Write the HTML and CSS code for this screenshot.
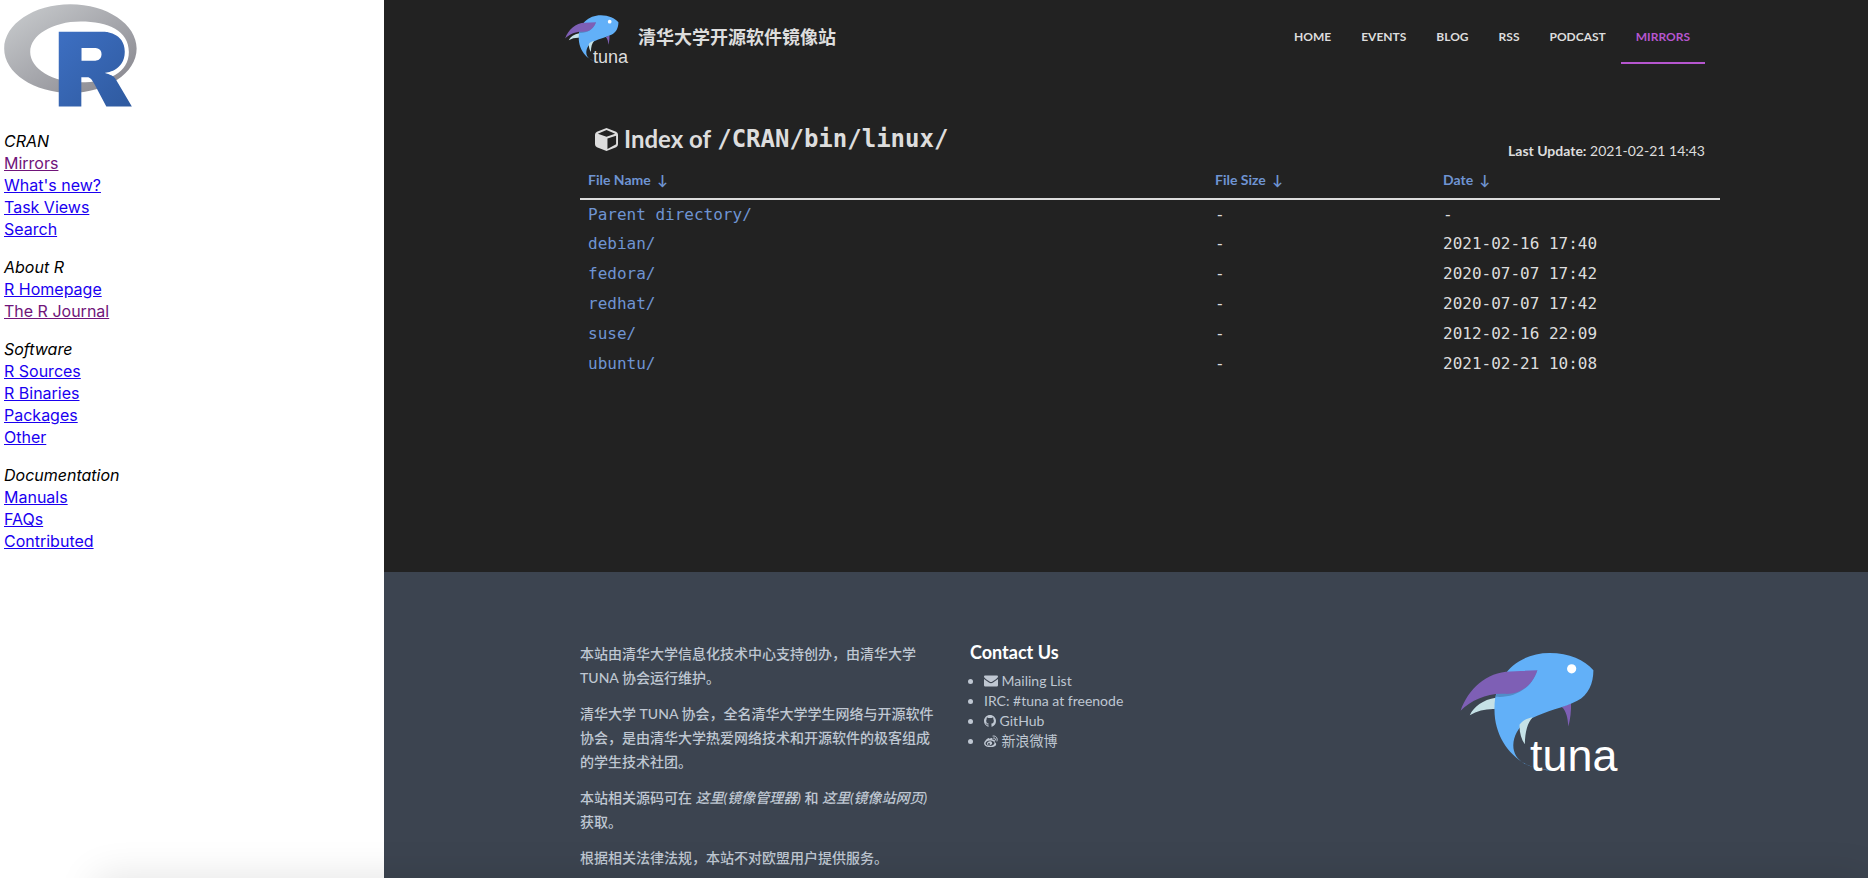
FILE: index.html
```html
<!DOCTYPE html>
<html lang="zh-CN">
<head>
    <meta charset="UTF-8">
    <title>The Comprehensive R Archive Network</title>
    <link rel="stylesheet" href="styles.css">
</head>
<body>
<!-- shared symbols -->
<svg class="symbols" aria-hidden="true">
    <symbol id="tuna" viewBox="60 66 484 364">
        <path fill="#c5e1e6" d="M89 258 C101 232 129 211 168 205 L165 239 C138 238 112 244 89 258 Z"/>
        <path fill="#7e5fb5" d="M368 233 L396 221 C397 246 394 270 388 292 C386 266 382 245 368 233 Z"/>
        <path fill="#62b0f8" d="M334 425 C240 424 161 341 164 235 C165 135 236 69 331 69 C391 69 437 91 464 121 C464 161 449 196 415 214 C374 235 320 245 277 267 C243 284 222 314 221 349 C221 390 254 418 334 425 Z"/>
        <path fill="#508dc8" d="M168 202 C216 206 272 185 294 122 L225 160 L170 191 Z"/>
        <path fill="#7e5fb5" d="M61 244 C84 179 139 126 212 125 L294 121 C278 169 242 194 198 193 C145 189 96 210 61 244 Z"/>
        <path fill="#c5e1e6" d="M280 264 C264 281 257 306 256 346 C245 330 239 309 240 286 C250 274 264 266 280 264 Z"/>
        <circle cx="398" cy="117" r="14" fill="#fff"/>
    </symbol>
</svg>

<div class="frames">
    <nav class="sidebar">
        <svg class="r-logo" viewBox="0 2 724 560" role="img" aria-label="R">
            <defs>
                <linearGradient id="ring" x1="0" y1="0" x2="1" y2="1">
                    <stop offset="0" stop-color="#cbced0"/>
                    <stop offset="1" stop-color="#84838b"/>
                </linearGradient>
                <linearGradient id="letter" x1="0" y1="0" x2="1" y2="1">
                    <stop offset="0" stop-color="#3d6fc2"/>
                    <stop offset="1" stop-color="#2f5a9f"/>
                </linearGradient>
            </defs>
            <path fill="url(#ring)" fill-rule="evenodd" d="M361.453,485.937C162.329,485.937 0.906,377.828 0.906,244.469C0.906,111.109 162.329,3 361.453,3C560.578,3 722,111.109 722,244.469C722,377.828 560.578,485.937 361.453,485.937ZM416.641,97.406C265.289,97.406 142.594,171.314 142.594,262.484C142.594,353.654 265.289,427.562 416.641,427.562C567.992,427.562 679.687,377.033 679.687,262.484C679.687,147.971 567.992,97.406 416.641,97.406Z"/>
            <path fill="url(#letter)" fill-rule="evenodd" d="M550,377C550,377 571.822,383.585 584.5,390C588.899,392.226 596.51,396.668 602,402.5C607.378,408.212 610,414 610,414L696,559L557,559.062L492,437C492,437 478.69,414.131 470.5,407.5C463.668,401.969 460.755,400 454,400L420.974,400L421,558.974L298,559.026L298,152.938L545,152.938C545,152.938 657.5,154.967 657.5,262C657.5,369.033 550,377 550,377ZM496.5,241.024L422.037,240.976L422,310.026L496.5,310.002C496.5,310.002 531,309.895 531,274.877C531,239.155 496.5,241.024 496.5,241.024Z"/>
        </svg>
        <p>
            <em>CRAN</em><br>
            <a class="visited" href="#">Mirrors</a><br>
            <a href="#">What's new?</a><br>
            <a href="#">Task Views</a><br>
            <a href="#">Search</a>
        </p>
        <p>
            <em>About R</em><br>
            <a href="#">R Homepage</a><br>
            <a class="visited" href="#">The R Journal</a>
        </p>
        <p>
            <em>Software</em><br>
            <a href="#">R Sources</a><br>
            <a href="#">R Binaries</a><br>
            <a href="#">Packages</a><br>
            <a href="#">Other</a>
        </p>
        <p>
            <em>Documentation</em><br>
            <a href="#">Manuals</a><br>
            <a href="#">FAQs</a><br>
            <a href="#">Contributed</a>
        </p>
    </nav>

    <div class="mirror">
        <header class="container navbar">
            <a class="brand" href="#">
                <svg class="brand-logo" viewBox="60 66 484 364" aria-hidden="true">
                    <use href="#tuna" x="60" y="66" width="484" height="364"/>
                    <text class="wordmark" x="272" y="427">tuna</text>
                </svg>
                <span>清华大学开源软件镜像站</span>
            </a>
            <nav class="menu">
                <a href="#">HOME</a>
                <a href="#">EVENTS</a>
                <a href="#">BLOG</a>
                <a href="#">RSS</a>
                <a href="#">PODCAST</a>
                <a class="active" href="#">MIRRORS</a>
            </nav>
        </header>

        <main class="container">
            <div class="heading">
                <h1>
                    <svg class="cube" viewBox="0 0 24 24" aria-hidden="true">
                        <path fill="currentColor" fill-rule="evenodd" d="M12 0 L22 4 Q24 5 24 7 V17 Q24 19 22 20 L12 24 L2 20 Q0 19 0 17 V7 Q0 5 2 4 Z M12 2 L3 6 L12 9 L21 6 Z M13 11 V22 L22 17 V8 Z"/>
                    </svg>
                    Index of <span class="path">/CRAN/bin/linux/</span>
                </h1>
                <p class="update"><strong>Last Update:</strong> 2021-02-21 14:43</p>
            </div>
            <table class="files">
                <thead>
                <tr>
                    <th class="name"><a href="#">File Name <span class="arrow">↓</span></a></th>
                    <th class="size"><a href="#">File Size <span class="arrow">↓</span></a></th>
                    <th><a href="#">Date <span class="arrow">↓</span></a></th>
                </tr>
                </thead>
                <tbody>
                <tr><td><a href="#">Parent directory/</a></td><td>-</td><td>-</td></tr>
                <tr><td><a href="#">debian/</a></td><td>-</td><td>2021-02-16 17:40</td></tr>
                <tr><td><a href="#">fedora/</a></td><td>-</td><td>2020-07-07 17:42</td></tr>
                <tr><td><a href="#">redhat/</a></td><td>-</td><td>2020-07-07 17:42</td></tr>
                <tr><td><a href="#">suse/</a></td><td>-</td><td>2012-02-16 22:09</td></tr>
                <tr><td><a href="#">ubuntu/</a></td><td>-</td><td>2021-02-21 10:08</td></tr>
                </tbody>
            </table>
        </main>

        <footer class="footer">
            <div class="container columns">
                <div class="about">
                    <p>本站由清华大学信息化技术中心支持创办，由清华大学 TUNA 协会运行维护。</p>
                    <p>清华大学 TUNA 协会，全名清华大学学生网络与开源软件协会，是由清华大学热爱网络技术和开源软件的极客组成的学生技术社团。</p>
                    <p>本站相关源码可在 <a href="#">这里(镜像管理器)</a> 和 <a href="#">这里(镜像站网页)</a> 获取。</p>
                    <p>根据相关法律法规，本站不对欧盟用户提供服务。</p>
                </div>
                <div class="contact">
                    <h2>Contact Us</h2>
                    <ul>
                        <li><a href="#"><svg class="icon" viewBox="0 0 14 12" aria-hidden="true"><path fill="currentColor" d="M1 0.5 H13 Q14 0.5 14 1.6 C14 2.6 13 3.4 12.3 3.9 L8.5 6.6 Q7 7.6 5.5 6.6 L1.7 3.9 C1 3.4 0 2.6 0 1.6 Q0 0.5 1 0.5 Z M0 4 L4.9 7.5 Q7 8.8 9.1 7.5 L14 4 V10.3 Q14 11.5 12.8 11.5 H1.2 Q0 11.5 0 10.3 Z"/></svg> Mailing List</a></li>
                        <li>IRC: #tuna at freenode</li>
                        <li><a href="#"><svg class="icon github" viewBox="0 0 16 16" aria-hidden="true"><path fill="currentColor" d="M8 0C3.58 0 0 3.58 0 8c0 3.54 2.29 6.53 5.47 7.59.4.07.55-.17.55-.38 0-.19-.01-.82-.01-1.49-2.01.37-2.53-.49-2.69-.94-.09-.23-.48-.94-.82-1.13-.28-.15-.68-.52-.01-.53.63-.01 1.08.58 1.23.82.72 1.21 1.87.87 2.33.66.07-.52.28-.87.51-1.07-1.78-.2-3.64-.89-3.64-3.95 0-.87.31-1.59.82-2.15-.08-.2-.36-1.02.08-2.12 0 0 .67-.21 2.2.82.64-.18 1.32-.27 2-.27s1.36.09 2 .27c1.53-1.04 2.2-.82 2.2-.82.44 1.1.16 1.92.08 2.12.51.56.82 1.27.82 2.15 0 3.07-1.87 3.75-3.65 3.95.29.25.54.73.54 1.48 0 1.07-.01 1.93-.01 2.2 0 .21.15.46.55.38A8.01 8.01 0 0 0 16 8c0-4.42-3.58-8-8-8z"/></svg> GitHub</a></li>
                        <li><a href="#"><svg class="icon" viewBox="0 0 28 24" aria-hidden="true"><path fill="currentColor" fill-rule="evenodd" d="M11 8 C14 5 18 5 17 10 C21 9 23 11 21 14 C31 20 16 27 9 24 C-2 22 -1 15 3 11 C6 7 11 4 11 8 Z M12 11 C6 11 3 14 3 17 C3 20 7 22 11 22 C17 22 21 19 21 16 C21 13 17 11 12 11 Z M12 12.500 C8 13 6 15 6 17.500 C6 20 8 21 11 21 C15 20 17 18 16 15.500 C15.500 13 14 12.500 12 12.500 Z M10 16 A2 2 0 1 0 10 20 A2 2 0 1 0 10 16 Z"/><path fill="none" stroke="currentColor" stroke-width="2" stroke-linecap="round" d="M18 2 C24 1 28 6 26 12 M19 6 C21 5 24 7 23 10"/></svg> 新浪微博</a></li>
                    </ul>
                </div>
                <div class="footer-brand">
                    <svg class="footer-logo" viewBox="60 66 484 364" role="img" aria-label="tuna">
                        <use href="#tuna" x="60" y="66" width="484" height="364"/>
                        <text class="wordmark" x="272" y="427">tuna</text>
                    </svg>
                </div>
            </div>
        </footer>
    </div>
</div>
</body>
</html>
```

FILE: styles.css
```css
* {
    box-sizing: border-box;
}

body {
    margin: 0;
}

a {
    color: inherit;
    text-decoration: none;
}

.symbols {
    position: absolute;
    width: 0;
    height: 0;
}

.frames {
    display: flex;
    height: 100vh;
    overflow: hidden;
}

/* soft shadow rising from the bottom edge */
.frames::after {
    content: "";
    position: fixed;
    top: 100vh;
    left: 96px;
    right: 0;
    height: 40px;
    box-shadow: 0 0 40px rgba(0, 0, 0, 0.12);
    pointer-events: none;
}

/* left frame */
.sidebar {
    flex: 0 0 384px;
    padding: 4px;
    background: #fff;
    color: #000;
    font: 16px/22px Inter, "Liberation Sans", sans-serif;
}

.r-logo {
    display: block;
    width: 133px;
    height: 103px;
    margin-bottom: 23px;
}

.sidebar p {
    margin: 0 0 16px;
}

.sidebar a {
    color: #1a00f0;
    text-decoration: underline;
}

.sidebar a.visited {
    color: #70147a;
}

/* right frame */
.mirror {
    flex: 1;
    display: flex;
    flex-direction: column;
    padding-left: 48px;
    background: #222;
    color: #ddd;
    font: 14px/20px Lato, "Noto Sans CJK SC", sans-serif;
}

.container {
    width: 100%;
    max-width: 1170px;
    margin: 0 auto;
    padding: 0 15px;
}

.navbar {
    display: flex;
    justify-content: space-between;
    align-items: flex-start;
    padding: 0 30px 0 0;
}

.brand {
    display: flex;
    align-items: center;
    gap: 9px;
    padding-top: 14px;
    font-size: 18px;
    font-weight: bold;
}

.brand span {
    padding-bottom: 4px;
}

.brand-logo {
    width: 64px;
    height: 50px;
}

.wordmark {
    fill: currentColor;
    font: 136px "Liberation Sans", sans-serif;
}

.menu {
    display: flex;
    font-size: 12px;
    font-weight: bold;
}

.menu a {
    padding: 27px 15px 15px;
    border-bottom: 2px solid transparent;
}

.menu a.active {
    color: #b656cf;
    border-bottom-color: #b656cf;
}

.heading {
    display: flex;
    justify-content: space-between;
    align-items: flex-end;
    margin-top: 61px;
    padding: 0 15px;
}

.heading h1 {
    display: flex;
    align-items: center;
    gap: 6px;
    margin: 0 0 8px;
    font-size: 24px;
    line-height: 28px;
}

.cube {
    width: 23px;
    height: 23px;
}

.path {
    font-family: "DejaVu Sans Mono", monospace;
}

.update {
    margin: 0;
}

.files {
    width: 100%;
    table-layout: fixed;
    border-collapse: collapse;
}

.files th {
    height: 38px;
    padding: 0 8px;
    border-bottom: 2px solid #ddd;
    text-align: left;
}

.files a {
    color: #6f94d2;
}

.files .name {
    width: 55%;
}

.files .size {
    width: 20%;
}

.arrow {
    margin-left: 3px;
}

.files td {
    height: 30px;
    padding: 0 8px;
    font: 16px/20px "DejaVu Sans Mono", monospace;
}

.footer {
    flex: 1 0 auto;
    margin-top: 193px;
    margin-left: -48px;
    padding: 70px 0 0 48px;
    background: #3c4450;
    color: #bfc7d2;
}

.columns {
    display: grid;
    grid-template-columns: repeat(3, 1fr);
    gap: 30px;
}

.about {
    font-weight: 500;
    line-height: 24px;
}

.about p {
    margin: 0 0 12px;
}

.about a {
    font-style: italic;
}

.contact h2 {
    margin: 0 0 9px;
    color: #fff;
    font-size: 18px;
    line-height: 20px;
}

.contact ul {
    margin: 0;
    padding-left: 14px;
}

.icon {
    width: 14px;
    height: 12px;
    vertical-align: -1px;
}

.icon.github {
    width: 12px;
}

.footer-brand {
    color: #fff;
    text-align: center;
}

.footer-logo {
    width: 160px;
    height: 120px;
    margin-top: 10px;
}
```
